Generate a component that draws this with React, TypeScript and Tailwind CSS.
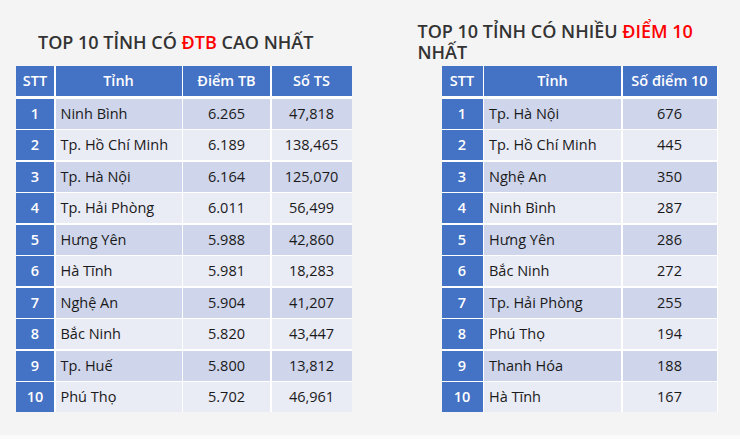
import React from "react";

const LEFT = [
  ["1", "Ninh Bình", "6.265", "47,818"],
  ["2", "Tp. Hồ Chí Minh", "6.189", "138,465"],
  ["3", "Tp. Hà Nội", "6.164", "125,070"],
  ["4", "Tp. Hải Phòng", "6.011", "56,499"],
  ["5", "Hưng Yên", "5.988", "42,860"],
  ["6", "Hà Tĩnh", "5.981", "18,283"],
  ["7", "Nghệ An", "5.904", "41,207"],
  ["8", "Bắc Ninh", "5.820", "43,447"],
  ["9", "Tp. Huế", "5.800", "13,812"],
  ["10", "Phú Thọ", "5.702", "46,961"],
];

const RIGHT = [
  ["1", "Tp. Hà Nội", "676"],
  ["2", "Tp. Hồ Chí Minh", "445"],
  ["3", "Nghệ An", "350"],
  ["4", "Ninh Bình", "287"],
  ["5", "Hưng Yên", "286"],
  ["6", "Bắc Ninh", "272"],
  ["7", "Tp. Hải Phòng", "255"],
  ["8", "Phú Thọ", "194"],
  ["9", "Thanh Hóa", "188"],
  ["10", "Hà Tĩnh", "167"],
];

function Row({ cells, cols, odd }: { cells: string[]; cols: string; odd: boolean }) {
  const bg = odd ? "bg-[#cfd5ea]" : "bg-[#e9ebf5]";
  return (
    <div className={`grid ${cols} gap-x-[1.5px] h-[30px]`}>
      {cells.map((c, i) =>
        i === 0 ? (
          <div key={i} className="flex items-center justify-center bg-[#4472c4] text-white font-semibold">
            {c}
          </div>
        ) : i === 1 ? (
          <div key={i} className={`flex items-center pl-[5px] ${bg}`}>
            {c}
          </div>
        ) : (
          <div key={i} className={`flex items-center justify-center ${bg}`}>
            {c}
          </div>
        )
      )}
    </div>
  );
}

function Table({ head, rows, cols }: { head: string[]; rows: string[][]; cols: string }) {
  return (
    <div className="flex flex-col bg-white text-[14.5px] text-[#1a1a1a]">
      <div className={`grid ${cols} gap-x-[1.5px] h-[30px] mb-[2.5px]`}>
        {head.map((h) => (
          <div key={h} className="flex items-center justify-center bg-[#4472c4] text-white font-semibold">
            {h}
          </div>
        ))}
      </div>
      <div className="flex flex-col gap-y-[1.5px]">
        {rows.map((r, i) => (
          <Row key={i} cells={r} cols={cols} odd={i % 2 === 0} />
        ))}
      </div>
    </div>
  );
}

export default function App() {
  return (
    <div className="w-[740px] h-[439px] bg-[#f4f4f4] flex flex-col font-['Open_Sans',sans-serif] overflow-hidden">
      <div className="flex flex-1">
        {/* Left: điểm trung bình */}
        <div className="pl-4 flex flex-col">
          <div className="h-[66px] pt-[31px] pl-[22px]">
            <h2 className="text-[18px] leading-[22px] font-semibold text-[#333333] whitespace-nowrap">
              TOP 10 TỈNH CÓ <span className="text-[#ff0000]">ĐTB</span> CAO NHẤT
            </h2>
          </div>
          <Table
            head={["STT", "Tỉnh", "Điểm TB", "Số TS"]}
            rows={LEFT}
            cols="grid-cols-[38px_126px_87px_80px]"
          />
        </div>

        {/* Right: điểm 10 */}
        <div className="ml-[66px] flex flex-col">
          <div className="h-[66px] pt-[21px] w-[300px]">
            <h2 className="text-[18px] leading-[21px] font-semibold text-[#333333]">
              TOP 10 TỈNH CÓ NHIỀU <span className="text-[#ff0000]">ĐIỂM 10</span>
              <br />
              NHẤT
            </h2>
          </div>
          <div className="pl-[24px]">
            <Table
              head={["STT", "Tỉnh", "Số điểm 10"]}
              rows={RIGHT}
              cols="grid-cols-[41px_137px_94px]"
            />
          </div>
        </div>
      </div>
      <div className="h-[4px] bg-[#fafafa]" />
    </div>
  );
}
